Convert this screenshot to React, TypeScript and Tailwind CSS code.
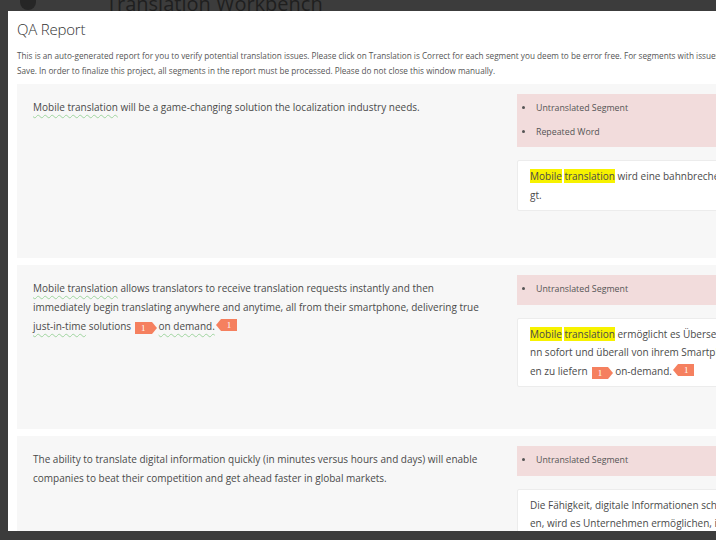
import React from 'react';

const font = { fontFamily: '"Open Sans", "Liberation Sans", sans-serif' };

function Wavy({ children }: { children: React.ReactNode }) {
  return (
    <span className="underline decoration-wavy decoration-[#9fd49f] decoration-1 underline-offset-[3px]">
      {children}
    </span>
  );
}

function Hl({ children }: { children: React.ReactNode }) {
  return <span className="bg-[#f7f200]">{children}</span>;
}

function TagOpen() {
  return (
    <span className="inline-flex items-center align-[-1px] ml-[4px] mr-[2px]">
      <span className="h-[12px] px-[6px] bg-[#f5805f] text-white text-[9px] leading-[12px] font-['Liberation_Serif',serif]">1</span>
      <span className="w-0 h-0 border-y-[6px] border-y-transparent border-l-[5px] border-l-[#f5805f]" />
    </span>
  );
}

function TagClose() {
  return (
    <span className="inline-flex items-center align-[-1px] ml-[1px]">
      <span className="w-0 h-0 border-y-[6px] border-y-transparent border-r-[5px] border-r-[#f5805f]" />
      <span className="h-[12px] px-[6px] bg-[#f5805f] text-white text-[9px] leading-[12px] font-['Liberation_Serif',serif]">1</span>
    </span>
  );
}

function Issues({ items }: { items: string[] }) {
  return (
    <ul className="bg-[#f2dcdc] py-[3px] pl-[18px] list-disc text-[8.8px] text-[#555]">
      {items.map(item => (
        <li key={item} className="leading-[23.5px] pl-[1px]">{item}</li>
      ))}
    </ul>
  );
}

function Segment({ source, issues, target, height }: {
  source: React.ReactNode;
  issues: string[];
  target: React.ReactNode;
  height: string;
}) {
  return (
    <div className={`flex gap-[34px] bg-[#f7f7f7] pl-[16px] ${height}`}>
      <div className="w-[450px] pt-[14px] text-[10px] leading-[19px] text-[#4a4a4a]">{source}</div>
      <div className="w-[440px] pt-[10px]">
        <Issues items={issues} />
        <div className="mt-[13px] bg-white border border-[#ececec] rounded-[2px] px-[12px] pt-[6px] pb-[6px] text-[10px] leading-[18.5px] text-[#4a4a4a] whitespace-nowrap">
          {target}
        </div>
      </div>
    </div>
  );
}

export default function App() {
  return (
    <div className="relative w-[716px] h-[540px] overflow-hidden bg-[#3c3c3c]" style={font}>
      <div className="flex items-start h-[12px] pl-[20px] gap-[70px]">
        <div className="w-[16px] h-[10px] rounded-b-full bg-[#262626]" />
        <div className="text-[20px] leading-[14px] text-[#1f1f1f] -mt-[3px]">Translation Workbench</div>
      </div>

      <div className="absolute left-[8px] top-[11px] bottom-[9px] w-[1000px] bg-white overflow-hidden">
        <div className="px-[9px] pt-[6px]">
          <h1 className="text-[15px] leading-[24px] font-light tracking-[-0.2px] text-[#333]">QA Report</h1>
          <p className="mt-[7px] text-[8.2px] leading-[15px] text-[#555] whitespace-nowrap">
            This is an auto-generated report for you to verify potential translation issues. Please click on Translation is Correct for each segment you deem to be error free. For segments with issues, please edit the translation and click on
            <br />
            Save. In order to finalize this project, all segments in the report must be processed. Please do not close this window manually.
          </p>

          <div className="mt-[6px] flex flex-col gap-[7px]">
            <Segment
              height="h-[174px]"
              source={<><Wavy>Mobile translation</Wavy> will be a game-changing solution the localization industry needs.</>}
              issues={['Untranslated Segment', 'Repeated Word']}
              target={<>
                <Hl>Mobile</Hl> <Hl>translation</Hl> wird eine bahnbrechende Lösung sein, die die Lokalisierungsbranche benöti<br />
                gt.
              </>}
            />
            <Segment
              height="h-[164px]"
              source={<>
                <Wavy>Mobile translation</Wavy> allows translators to receive translation requests instantly and then immediately begin translating anywhere and anytime, all from their smartphone, delivering true <Wavy>just-in-time</Wavy> solutions<TagOpen /><Wavy>on demand.</Wavy><TagClose />
              </>}
              issues={['Untranslated Segment']}
              target={<>
                <Hl>Mobile</Hl> <Hl>translation</Hl> ermöglicht es Übersetzern, Übersetzungsanfragen sofort zu erhalten und da<br />
                nn sofort und überall von ihrem Smartphone aus zu übersetzen und Just-in-Time-Lösung<br />
                en zu liefern<TagOpen />on-demand.<TagClose />
              </>}
            />
            <Segment
              height="h-[164px]"
              source={<>The ability to translate digital information quickly (in minutes versus hours and days) will enable companies to beat their competition and get ahead faster in global markets.</>}
              issues={['Untranslated Segment']}
              target={<>
                Die Fähigkeit, digitale Informationen schnell (in Minuten statt Stunden und Tagen) zu übersetz<br />
                en, wird es Unternehmen ermöglichen, ihre Konkurrenz zu schlagen und auf globalen Märkten schneller voranzukommen.
              </>}
            />
          </div>
        </div>
      </div>
    </div>
  );
}
